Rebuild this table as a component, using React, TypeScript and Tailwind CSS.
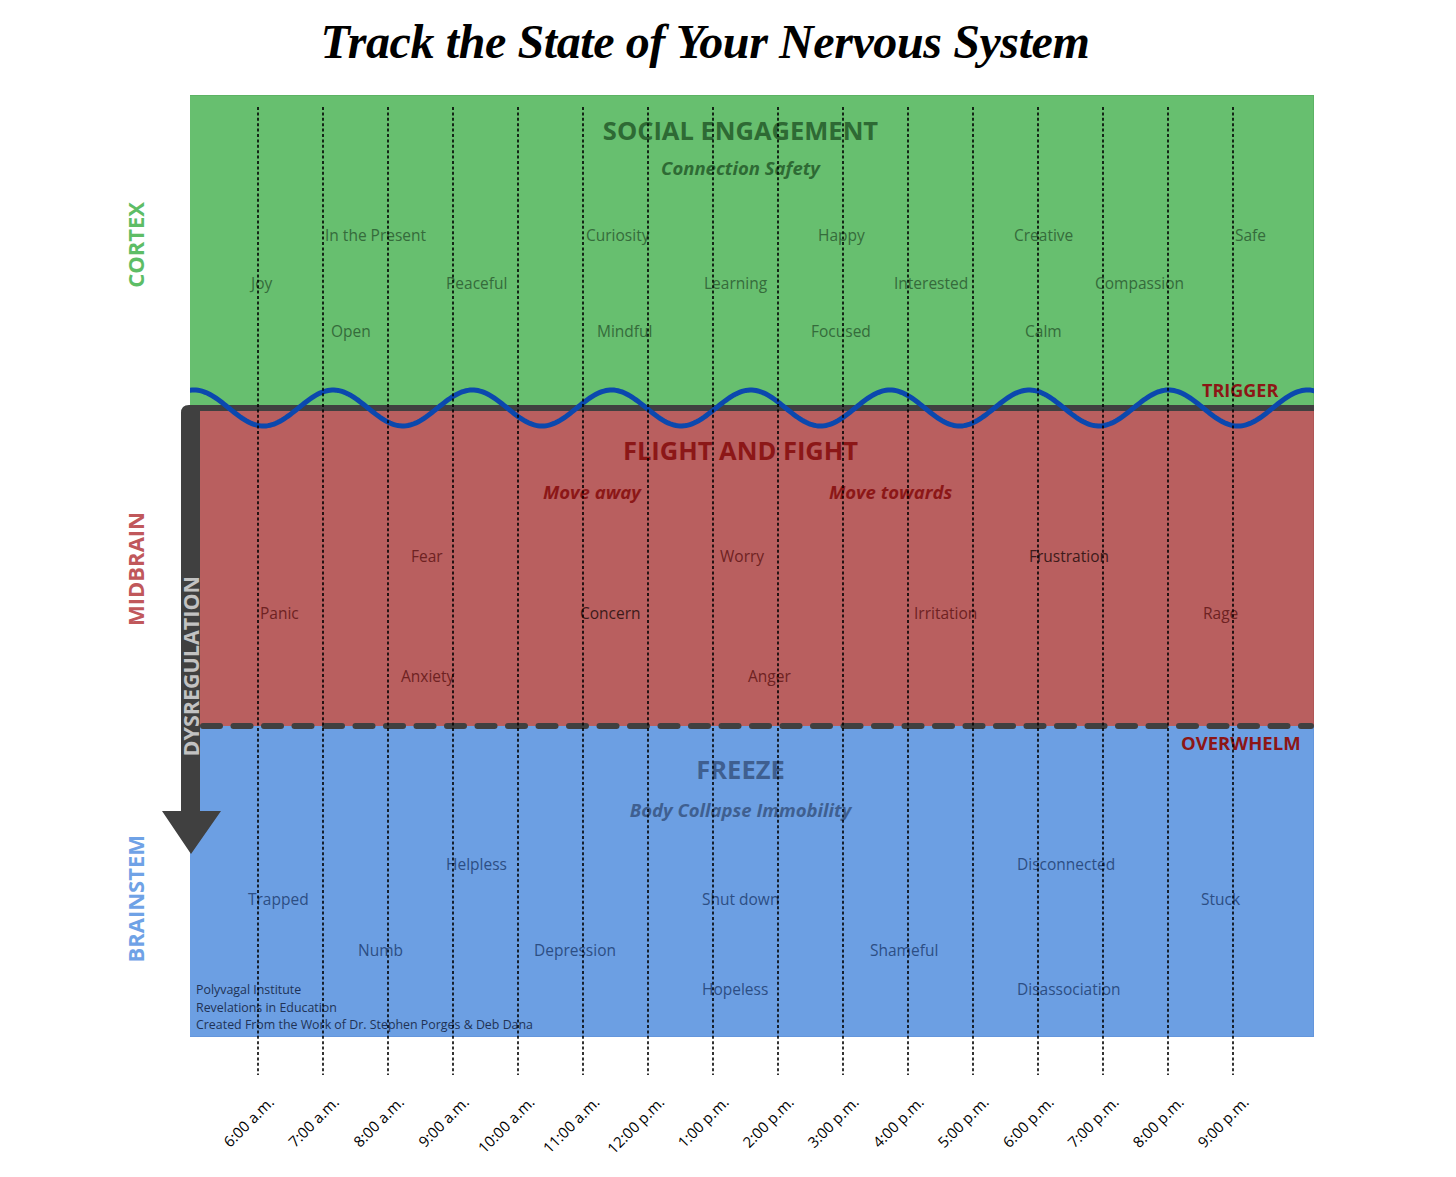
import React from 'react';

type Word = [string, number, number, boolean?];

// positions are page coordinates: [text, left x, centre y, darker]
const greenWords: Word[] = [
  ['In the Present', 325, 235], ['Curiosity', 586, 235], ['Happy', 818, 235], ['Creative', 1014, 235], ['Safe', 1235, 235],
  ['Joy', 251, 283], ['Peaceful', 446, 283], ['Learning', 704, 283], ['Interested', 894, 283], ['Compassion', 1095, 283],
  ['Open', 331, 331], ['Mindful', 597, 331], ['Focused', 811, 331], ['Calm', 1025, 331],
];

const redWords: Word[] = [
  ['Fear', 411, 557], ['Worry', 720, 557], ['Frustration', 1029, 557, true],
  ['Panic', 260, 614], ['Concern', 580, 614, true], ['Irritation', 914, 614], ['Rage', 1203, 614],
  ['Anxiety', 401, 677], ['Anger', 748, 677],
];

const blueWords: Word[] = [
  ['Helpless', 446, 865], ['Disconnected', 1017, 865],
  ['Trapped', 248, 900], ['Shut down', 702, 900], ['Stuck', 1201, 900],
  ['Numb', 358, 951], ['Depression', 534, 951], ['Shameful', 870, 951],
  ['Hopeless', 702, 990], ['Disassociation', 1017, 990],
];

const times = [
  '6:00 a.m.', '7:00 a.m.', '8:00 a.m.', '9:00 a.m.', '10:00 a.m.', '11:00 a.m.', '12:00 p.m.', '1:00 p.m.',
  '2:00 p.m.', '3:00 p.m.', '4:00 p.m.', '5:00 p.m.', '6:00 p.m.', '7:00 p.m.', '8:00 p.m.', '9:00 p.m.',
];

const CHART_X = 190;
const lineXs = times.map((_, i) => 68 + i * 65);

const wavePath = (() => {
  let d = '';
  for (let x = 0; x <= 1124; x += 2) {
    const y = 313 - 18 * Math.cos((2 * Math.PI * (x - 4)) / 139.2);
    d += (x === 0 ? 'M' : 'L') + x + ' ' + y.toFixed(2) + ' ';
  }
  return d;
})();

function Words({ words, top, color, dark }: { words: Word[]; top: number; color: string; dark?: string }) {
  return (
    <>
      {words.map(([text, x, cy, isDark]) => (
        <span
          key={text}
          className={`absolute whitespace-nowrap text-[15.5px] leading-[20px] ${isDark ? dark : color}`}
          style={{ left: x - CHART_X, top: cy - top - 11 }}
        >
          {text}
        </span>
      ))}
    </>
  );
}

function SideLabel({ children, className }: { children: React.ReactNode; className: string }) {
  return (
    <span className={`[writing-mode:vertical-rl] rotate-180 text-[22px] font-bold leading-none ${className}`}>
      {children}
    </span>
  );
}

export default function App() {
  return (
    <div className="relative w-[1456px] h-[1177px] bg-white font-['Open_Sans',sans-serif] overflow-hidden">
      <h1 className="h-[95px] flex items-start justify-center pt-[14px] pr-[46px] font-['Liberation_Serif',serif] italic font-bold text-[48px] leading-[56px] tracking-[-0.4px] text-black">
        Track the State of Your Nervous System
      </h1>

      <div className="flex">
        {/* brain region labels */}
        <div className="w-[190px] flex flex-col">
          <div className="h-[316px] flex items-center justify-end pr-[44px] pb-[16px]">
            <SideLabel className="text-[#5dbd66]">CORTEX</SideLabel>
          </div>
          <div className="h-[315px] flex items-center justify-end pr-[44px]">
            <SideLabel className="text-[#c0585b]">MIDBRAIN</SideLabel>
          </div>
          <div className="h-[311px] flex items-center justify-end pr-[44px] pt-[35px]">
            <SideLabel className="text-[#6fa2e6]">BRAINSTEM</SideLabel>
          </div>
        </div>

        <div className="relative w-[1124px]">
          {/* social engagement */}
          <div className="relative h-[310px] bg-[#67bf6f] border-t border-r border-[#5cb364] flex flex-col items-center pt-[18px] pr-[22px]">
            <div className="text-[25.5px] font-bold leading-[32px] text-[#2e6a34]">SOCIAL ENGAGEMENT</div>
            <div className="mt-[10px] text-[18.5px] font-bold italic leading-[24px] text-[#2e6a34]">Connection Safety</div>
            <Words words={greenWords} top={95} color="text-[#356b3b]" />
            <span className="absolute left-[1012px] top-[282px] text-[18px] font-bold leading-[24px] text-[#8c1616]">TRIGGER</span>
          </div>

          <div className="h-[6px] bg-[#404040]" />

          {/* flight and fight */}
          <div className="relative h-[315px] bg-[#b95f5f] border-r border-[#b05656] flex flex-col items-center pt-[23px] pr-[22px]">
            <div className="text-[25.5px] font-bold leading-[32px] text-[#8c1717]">FLIGHT AND FIGHT</div>
            <span className="absolute left-[353px] top-[69px] text-[18.5px] font-bold italic leading-[24px] text-[#8c1717]">Move away</span>
            <span className="absolute left-[639px] top-[69px] text-[18.5px] font-bold italic leading-[24px] text-[#8c1717]">Move towards</span>
            <Words words={redWords} top={411} color="text-[#6e2222]" dark="text-[#3d1a1a]" />
          </div>

          {/* freeze */}
          <div className="relative h-[311px] bg-[#6c9fe3] border-r border-b border-[#6496dc] flex flex-col items-center pt-[27px] pr-[22px]">
            <div className="text-[25.5px] font-bold leading-[32px] text-[#3f5f90]">FREEZE</div>
            <div className="mt-[13px] text-[18.5px] font-bold italic leading-[24px] text-[#3f5f90]">Body Collapse Immobility</div>
            <span className="absolute left-[991px] top-[5px] text-[18.5px] font-bold leading-[24px] text-[#8c1616]">OVERWHELM</span>
            <Words words={blueWords} top={726} color="text-[#2c4e84]" />
            <div className="absolute left-[6px] top-[255px] text-[12.4px] leading-[17.5px] text-[#1f3356]">
              <div>Polyvagal Institute</div>
              <div>Revelations in Education</div>
              <div>Created From the Work of Dr. Stephen Porges &amp; Deb Dana</div>
            </div>
          </div>

          {/* time axis */}
          <div className="relative h-[140px]">
            {times.map((t, i) => (
              <div key={t} className="absolute top-[62px] w-0 h-0" style={{ left: lineXs[i] + 13 }}>
                <span className="absolute right-0 top-[-10px] leading-[20px] text-[15px] text-black whitespace-nowrap origin-right -rotate-45">
                  {t}
                </span>
              </div>
            ))}
          </div>

          {/* dysregulation arrow */}
          <svg className="absolute left-[-28px] top-[310px] pointer-events-none" width="59" height="450" viewBox="0 0 59 450">
            <path d="M19 8 Q19 0 27 0 L59 0 L59 6 L38 6 L38 406 L59 406 L29 449 L0 406 L19 406 Z" fill="#404040" />
          </svg>
          <div className="absolute left-[-9px] top-[480px] w-[19px] h-[182px] flex items-center justify-center">
            <span className="[writing-mode:vertical-rl] rotate-180 text-[21.5px] font-bold leading-none text-[#c2c2c2]">
              DYSREGULATION
            </span>
          </div>

          {/* wave, overwhelm boundary, hour lines */}
          <svg className="absolute left-0 top-0 pointer-events-none" width="1124" height="1082" viewBox="0 0 1124 1082">
            <path d={wavePath} fill="none" stroke="#0b48ae" strokeWidth="5" strokeLinecap="round" />
            <line x1="13" y1="631" x2="1121" y2="631" stroke="#404040" strokeWidth="6" strokeLinecap="round" strokeDasharray="17 13.5" />
            {lineXs.map((x) => (
              <line key={x} x1={x} y1="12" x2={x} y2="980" stroke="#000" strokeWidth="1.6" strokeDasharray="3 2.4" />
            ))}
          </svg>
        </div>
      </div>
    </div>
  );
}
